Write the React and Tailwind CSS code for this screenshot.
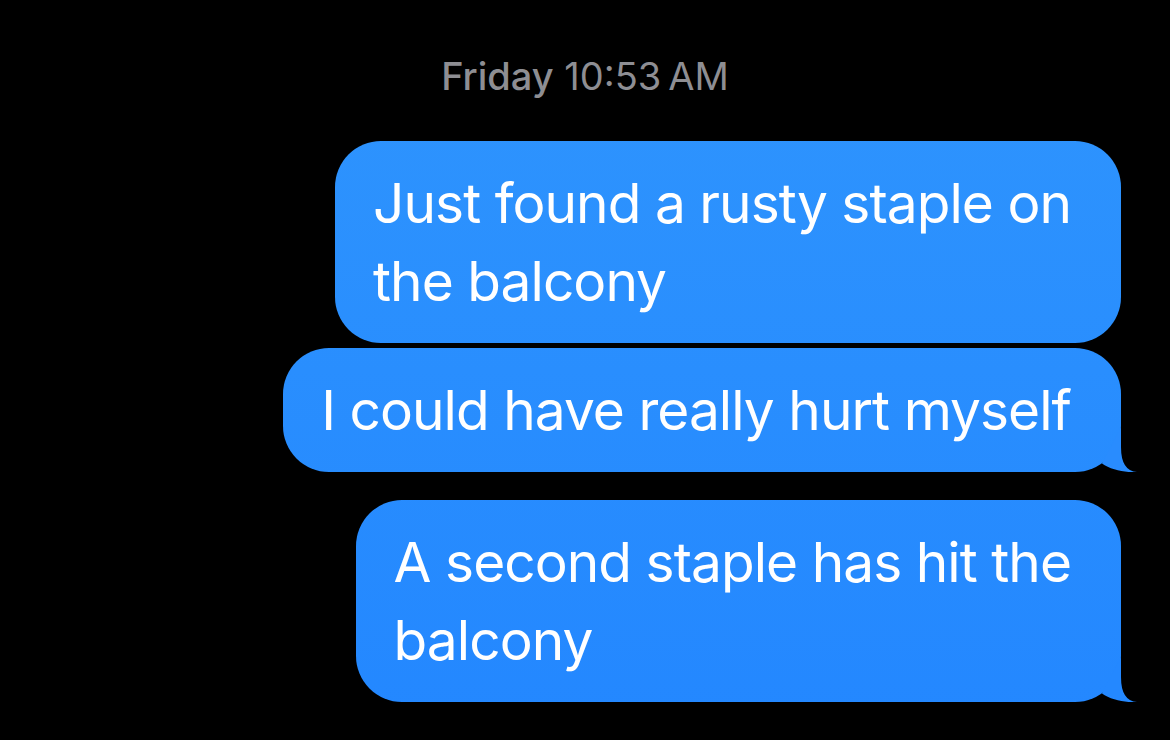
import React from "react";

const font = { fontFamily: "Inter, 'Noto Sans', sans-serif" };

function Tail({ color }) {
  return (
    <svg
      className="absolute right-[-16px] bottom-0"
      width="40"
      height="45"
      viewBox="0 0 40 45"
    >
      <path d="M24 0 L24 20 Q24 44 40 45 C30 46 14 43 5 36.5 Z" fill={color} />
    </svg>
  );
}

function Bubble({ children, tail, tailColor, extra = "" }) {
  return (
    <div
      className={`relative shrink-0 whitespace-nowrap rounded-[46px] pl-[38px] pr-[50px] py-[23px] text-white text-[55px] leading-[78px] tracking-[-0.95px] bg-[linear-gradient(180deg,#2f95fd_0px,#2387ff_740px)] bg-fixed ${extra}`}
      style={font}
    >
      {children}
      {tail && <Tail color={tailColor} />}
    </div>
  );
}

export default function App() {
  return (
    <div className="w-[1170px] h-[740px] bg-black overflow-hidden flex flex-col" style={font}>
      <div className="shrink-0 pt-[53px] h-[141px] text-center text-[38px] leading-[46px] text-[#8e8e93]">
        <span className="font-medium">Friday</span> 10:53<span className="ml-[7px]">AM</span>
      </div>
      <div className="shrink-0 flex flex-col items-end pr-[49px]">
        <Bubble>
          Just found a rusty staple on
          <br />
          the balcony
        </Bubble>
        <Bubble tail tailColor="#298cfe" extra="mt-[5px]">
          I could have really hurt myself
        </Bubble>
        <Bubble tail tailColor="#2488ff" extra="mt-[28px]">
          A second staple has hit the
          <br />
          balcony
        </Bubble>
      </div>
    </div>
  );
}
